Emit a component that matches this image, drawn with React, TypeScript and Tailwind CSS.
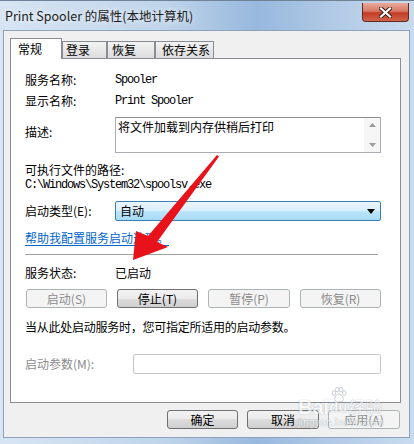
import React from 'react';

const btn =
  "h-[19px] rounded-[3px] border text-[12px] leading-[17px] flex items-center justify-center";
const btnOn =
  "border-[#707070] bg-[linear-gradient(#f2f2f2_0%,#ebebeb_50%,#dddddd_50%,#cfcfcf_100%)] text-black";
const btnOff = "border-[#adb2b5] bg-[#f4f4f4] text-[#8b8b8b]";

const Tab = ({ label, active, w, pl }: { label: string; active?: boolean; w: string; pl: string }) => (
  <div
    className={
      active
        ? `${w} ${pl} h-[21px] border border-b-0 border-[#898c95] bg-white text-[12px] leading-[18px] pt-[1px]`
        : `${w} ${pl} h-[18px] border border-[#898c95] bg-[linear-gradient(#f3f3f3,#dcdcdc)] text-[12px] leading-[16px]`
    }
  >
    {label}
  </div>
);

const App: React.FC = () => {
  return (
    <div className="relative w-[414px] h-[444px] overflow-hidden border-t border-[#6f8298] bg-[linear-gradient(90deg,#d7e5f3_0%,#bfd4ea_40%,#98b8de_62%,#b7cee8_85%,#c9dbee_100%)] font-['Noto_Sans_CJK_SC',sans-serif] text-black">
      {/* title bar */}
      <div className="flex h-[29px]">
        <div className="pl-[5px] pt-[7px] text-[12.5px] leading-[16px] text-[#1b1b1b] [text-shadow:0_0_6px_#ffffff]">
          Print Spooler 的属性(本地计算机)
        </div>
        <div className="ml-auto mr-[5px] mt-[2px] w-[47px] h-[19px] flex items-center justify-center rounded-b-[4px] border border-t-0 border-[#5e2a1f] bg-[linear-gradient(#e9a99b_0%,#d77a66_45%,#c43c26_55%,#d0644b_100%)]">
          <svg width="13" height="11" viewBox="0 0 13 11">
            <path d="M2 1.5 L11 9.5 M11 1.5 L2 9.5" stroke="#3b1a14" strokeWidth="4" strokeLinecap="square" />
            <path d="M2 1.5 L11 9.5 M11 1.5 L2 9.5" stroke="#ffffff" strokeWidth="2.2" strokeLinecap="square" />
          </svg>
        </div>
      </div>

      {/* client */}
      <div className="ml-[3px] w-[407px] h-[408px] border border-[#8ea3bb] bg-[#f0f0f0]">
        <div className="relative z-10 -mb-px mt-[7px] ml-[6px] flex items-end h-[21px]">
          <Tab label="常规" active w="w-[52px]" pl="pl-[7px]" />
          <Tab label="登录" w="w-[45px]" pl="pl-[3px]" />
          <Tab label="恢复" w="w-[48px]" pl="pl-[4px]" />
          <Tab label="依存关系" w="w-[59px]" pl="pl-[6px]" />
        </div>

        <div className="ml-[6px] w-[391px] h-[345px] border border-[#898c95] bg-white pl-[14px] text-[12px] leading-[16px]">
          <div className="mt-[13px] flex h-[16px] items-center">
            <span className="w-[90px]">服务名称:</span>
            <span className="font-['Liberation_Mono',monospace] tracking-[-1.2px]">Spooler</span>
          </div>
          <div className="mt-[5px] flex h-[16px] items-center">
            <span className="w-[90px]">显示名称:</span>
            <span className="font-['Liberation_Mono',monospace] tracking-[-1.2px]">Print Spooler</span>
          </div>

          <div className="mt-[8px] flex items-start">
            <span className="w-[90px] mt-[7px]">描述:</span>
            <div className="w-[266px] h-[36px] flex border border-[#abadb3] border-t-[#8e8f94]">
              <div className="flex-1 pl-[2px] pt-[1px]">将文件加载到内存供稍后打印</div>
              <div className="w-[16px] bg-[#f6f6f6] flex flex-col items-center justify-between py-[5px]">
                <svg width="7" height="4" viewBox="0 0 7 4"><path d="M0 4 L3.5 0 L7 4 Z" fill="#9c9c9c" /></svg>
                <svg width="7" height="4" viewBox="0 0 7 4"><path d="M0 0 L3.5 4 L7 0 Z" fill="#9c9c9c" /></svg>
              </div>
            </div>
          </div>

          <div className="mt-[10px] h-[14px] leading-[14px]">可执行文件的路径:</div>
          <div className="mt-[1px] h-[14px] leading-[14px] font-['Liberation_Mono',monospace] tracking-[-1.2px]">
            C:\Windows\System32\spoolsv.exe
          </div>

          <div className="mt-[9px] flex h-[20px] items-center">
            <span className="w-[90px]">启动类型(E):</span>
            <div className="w-[266px] h-[20px] flex items-center justify-between rounded-[2px] border border-[#3c7fb1] bg-[linear-gradient(#eaf5fd_0%,#d9effc_50%,#bee6fd_50%,#a7d9f5_100%)] pl-[4px] pr-[5px]">
              <span>自动</span>
              <svg width="8" height="5" viewBox="0 0 8 5"><path d="M0 0 L8 0 L4 5 Z" fill="#000" /></svg>
            </div>
          </div>

          <div className="mt-[9px] h-[16px] text-[#0066cc] underline underline-offset-2">帮助我配置服务启动选项。</div>

          <div className="mt-[8px] w-[353px] h-px bg-[#a0a0a0]" />

          <div className="mt-[10px] flex h-[16px] items-center">
            <span className="w-[90px]">服务状态:</span>
            <span>已启动</span>
          </div>

          <div className="mt-[8px] ml-px flex gap-[10px]">
            <div className={`${btn} ${btnOff} w-[81px]`}>启动(S)</div>
            <div className={`${btn} ${btnOn} w-[81px]`}>停止(T)</div>
            <div className={`${btn} ${btnOff} w-[82px]`}>暂停(P)</div>
            <div className={`${btn} ${btnOff} w-[81px]`}>恢复(R)</div>
          </div>

          <div className="mt-[11px] h-[16px] tracking-[-0.25px]">当从此处启动服务时，您可指定所适用的启动参数。</div>

          <div className="mt-[19px] flex h-[20px] items-center">
            <span className="w-[108px] text-[#8b8b8b]">启动参数(M):</span>
            <div className="w-[248px] h-[20px] rounded-[2px] border border-[#c4c6ca] bg-white" />
          </div>
        </div>

        <div className="mt-[7px] pr-[9px] flex justify-end gap-[9px]">
          <div className={`${btn} ${btnOn} w-[71px]`}>确定</div>
          <div className={`${btn} ${btnOn} w-[72px]`}>取消</div>
          <div className={`${btn} ${btnOff} w-[72px]`}>应用(A)</div>
        </div>
      </div>

      {/* red annotation arrow */}
      <svg className="absolute left-0 top-0 pointer-events-none" width="414" height="444" viewBox="0 0 414 444">
        <polygon
          points="219,155.5 157,241 168,246 133,259 136,230 148,235 217,154"
          fill="#e8121a"
        />
      </svg>

      {/* watermark */}
      <div className="absolute left-[298px] top-[386px] pointer-events-none opacity-60 text-white [text-shadow:0_0_1px_#8e9aa6,0_0_1px_#8e9aa6]">
        <svg className="absolute left-[33px] top-0" width="16" height="16" viewBox="0 0 16 16">
          <g fill="#ffffff" stroke="#8e9aa6" strokeWidth="0.8">
            <ellipse cx="3" cy="6" rx="1.8" ry="2.3" />
            <ellipse cx="6.3" cy="2.6" rx="1.8" ry="2.3" />
            <ellipse cx="10" cy="2.6" rx="1.8" ry="2.3" />
            <ellipse cx="13.2" cy="6" rx="1.8" ry="2.3" />
            <path d="M8 7 C5 7 3 11 4 13.5 C5.5 15.5 10.5 15.5 12 13.5 C13 11 11 7 8 7 Z" />
          </g>
        </svg>
        <div className="flex items-end leading-[20px] pt-[10px]">
          <span className="font-['Liberation_Sans',sans-serif] font-bold text-[20px]">Bai</span>
          <span className="font-['Liberation_Sans',sans-serif] font-bold text-[15px]">du</span>
          <span className="text-[17px] ml-[1px]">经验</span>
        </div>
        <div className="font-['Liberation_Sans',sans-serif] text-[10px] leading-[12px] tracking-[0.3px]">jingyan.baidu.com</div>
      </div>
    </div>
  );
};

export default App;
